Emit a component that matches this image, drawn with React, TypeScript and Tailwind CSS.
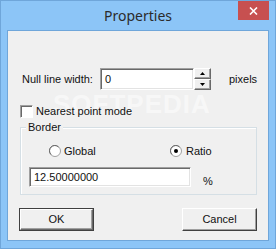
// Properties dialog — Windows 8 style frame, classic 3D controls.

const FONT = "font-['Liberation_Sans',Tahoma,sans-serif]";

function Sunken({ className, children }: { className: string; children?: React.ReactNode }) {
  return (
    <div
      className={`border border-t-[#a0a0a0] border-l-[#a0a0a0] border-b-white border-r-white bg-white shadow-[inset_1px_1px_0_#696969,inset_-1px_-1px_0_#e3e3e3] ${className}`}
    >
      {children}
    </div>
  );
}

function SpinButton({ up }: { up: boolean }) {
  return (
    <div className="flex h-[11px] w-[17px] items-center justify-center border border-t-white border-l-white border-b-[#696969] border-r-[#696969] bg-[#f0f0f0] shadow-[inset_-1px_-1px_0_#a0a0a0]">
      <svg width="5" height="3" viewBox="0 0 5 3">
        {up ? <path d="M2.5 0 L5 3 L0 3 Z" fill="#000" /> : <path d="M0 0 L5 0 L2.5 3 Z" fill="#000" />}
      </svg>
    </div>
  );
}

function Radio({ checked }: { checked: boolean }) {
  return (
    <svg width="12" height="12" viewBox="0 0 12 12">
      <circle cx="6" cy="6" r="5.5" fill="#fff" stroke="#a0a0a0" />
      <path d="M2 9.5 A5 5 0 0 1 9.5 2" fill="none" stroke="#696969" strokeWidth="1" />
      {checked && <circle cx="6" cy="6" r="2" fill="#000" />}
    </svg>
  );
}

function Button({ label, isDefault }: { label: string; isDefault?: boolean }) {
  return isDefault ? (
    <div className="h-[23px] w-[75px] border border-[#404040]">
      <div className="flex h-full w-full items-center justify-center border border-t-white border-l-white border-b-[#696969] border-r-[#696969] bg-[#f0f0f0] shadow-[inset_-1px_-1px_0_#a0a0a0] text-[11px] text-[#111]">
        {label}
      </div>
    </div>
  ) : (
    <div className="flex h-[23px] w-[75px] items-center justify-center border border-t-white border-l-white border-b-[#404040] border-r-[#404040] bg-[#f0f0f0] shadow-[inset_-1px_-1px_0_#a0a0a0] text-[11px] text-[#111]">
      {label}
    </div>
  );
}

export default function App() {
  return (
    <div className={`flex h-[249px] w-[276px] flex-col border border-[#6fa6da] bg-[#8cc5f7] ${FONT}`}>
      {/* title bar */}
      <div className="grid h-[29px] grid-cols-[1fr_auto_1fr]">
        <div />
        <div className="pt-[3px] text-[14px] leading-[24px] text-[#2b2b2b] font-['Noto_Sans',sans-serif]">Properties</div>
        <div className="flex justify-end pr-[6px]">
          <div className="flex h-[19px] w-[31px] items-center justify-center bg-[#c75050]">
            <svg width="9" height="8" viewBox="0 0 9 8">
              <path d="M1 0.5 L8 7.5 M8 0.5 L1 7.5" stroke="#fff" strokeWidth="1.6" />
            </svg>
          </div>
        </div>
      </div>

      {/* client */}
      <div className="relative mx-[6px] h-[211px] border border-[#6fa6da] bg-[#f0f0f0] text-[11px] text-[#111]">
        {/* watermark */}
        <div className="pointer-events-none absolute left-[45px] top-[60px] text-[26px] font-bold leading-[26px] tracking-[1px] text-white opacity-50">SOFTPEDIA</div>

        <div className="relative flex flex-col pl-[12px] pt-[37px]">
          <div className="flex items-center">
            <span className="ml-[2px] w-[78px]">Null line width:</span>
            <Sunken className="flex h-[22px] w-[94px] items-center pl-[4px]">0</Sunken>
            <div className="flex flex-col">
              <SpinButton up />
              <SpinButton up={false} />
            </div>
            <span className="ml-[18px]">pixels</span>
          </div>

          <div className="mt-[15px] flex items-center leading-[13px]">
            <div className="h-[13px] w-[13px] border border-t-[#a0a0a0] border-l-[#a0a0a0] border-b-white border-r-white bg-white shadow-[inset_1px_1px_0_#696969]" />
            <span className="ml-[3px]">Nearest point mode</span>
          </div>

          {/* group box */}
          <div className="relative mt-[9px] h-[68px] w-[237px] border border-[#d5dfe5] shadow-[inset_1px_1px_0_#fff]">
            <span className="absolute left-[5px] top-[-8px] bg-[#f0f0f0] px-[2px] leading-[14px]">Border</span>
            <div className="flex items-center pl-[28px] pt-[17px] leading-[12px]">
              <Radio checked={false} />
              <span className="ml-[3px] w-[106px]">Global</span>
              <Radio checked />
              <span className="ml-[4px]">Ratio</span>
            </div>
            <div className="mt-[8px] flex items-center pl-[8px]">
              <Sunken className="flex h-[20px] w-[162px] items-center pl-[4px]">12.50000000</Sunken>
              <span className="ml-[12px] mt-[8px]">%</span>
            </div>
          </div>

          <div className="ml-[-1px] mt-[13px] flex w-[238px] justify-between">
            <Button label="OK" isDefault />
            <Button label="Cancel" />
          </div>
        </div>
      </div>
    </div>
  );
}
